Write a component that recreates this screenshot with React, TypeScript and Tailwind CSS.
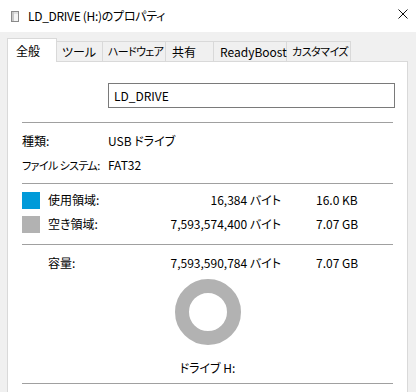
import React from "react";

const tabs = [
  { label: "全般", w: "w-[50px]", pl: "pl-[8px]", active: true, tx: "" },
  { label: "ツール", w: "w-[46px]", pl: "pl-[5px]", tx: "" },
  { label: "ハードウェア", w: "w-[63px]", pl: "pl-[5px]", tx: "text-[11px] tracking-[-0.7px]" },
  { label: "共有", w: "w-[48px]", pl: "pl-[6px]", tx: "" },
  { label: "ReadyBoost", w: "w-[73px]", pl: "pl-[6px]", tx: "" },
  { label: "カスタマイズ", w: "w-[64px]", pl: "pl-[5px]", tx: "text-[11px] tracking-[-0.5px]" },
];

function DriveIcon() {
  return (
    <svg width="8" height="11" viewBox="0 0 8 11" aria-hidden>
      <rect x="0.5" y="0.5" width="7" height="10" fill="#f4f4f4" stroke="#8a8a8a" />
      <rect x="1" y="1" width="2" height="9" fill="#c8c8c8" />
      <rect x="3" y="1" width="4" height="2" fill="#e0e0e0" />
    </svg>
  );
}

function Sep({ className = "" }: { className?: string }) {
  return <div className={`h-px bg-[#a0a0a0] ${className}`} />;
}

export default function App() {
  return (
    <div className="w-[416px] h-[392px] overflow-hidden whitespace-nowrap bg-[#f0f0f0] text-[12px] leading-none text-black font-['Noto_Sans_CJK_JP',sans-serif] [font-feature-settings:'palt']">
      {/* title bar */}
      <div className="relative flex h-[32px] items-center bg-white">
        <div className="ml-[11px] flex items-center">
          <DriveIcon />
        </div>
        <span className="ml-[9px] tracking-[-0.3px]">LD_DRIVE (H:)のプロパティ</span>
        <svg className="absolute right-[8px] top-[9px]" width="10" height="10" viewBox="0 0 10 10" aria-hidden>
          <path d="M0.5 0.5 L9.5 9.5 M9.5 0.5 L0.5 9.5" stroke="#111" strokeWidth="1" />
        </svg>
      </div>

      <div className="pl-[7px] pt-[6px]">
        {/* tabs */}
        <div className="flex h-[23px] items-end">
          {tabs.map((t) =>
            t.active ? (
              <div
                key={t.label}
                className={`relative z-10 mb-[-1px] flex h-[24px] items-center border-x border-t border-[#d9d9d9] bg-white ${t.w} ${t.pl}`}
              >
                {t.label}
              </div>
            ) : (
              <div
                key={t.label}
                className={`flex h-[20px] items-center border-r border-t border-[#d9d9d9] bg-[#f0f0f0] ${t.w} ${t.pl} ${t.tx}`}
              >
                {t.label}
              </div>
            )
          )}
        </div>

        {/* panel */}
        <div className="h-[340px] w-[401px] border border-[#d9d9d9] bg-white px-[14px] pt-[21px]">
          <div className="ml-[86px] flex h-[25px] w-[287px] items-center border border-[#7a7a7a] pl-[5px]">
            LD_DRIVE
          </div>

          <Sep className="mt-[14px]" />

          <div className="mt-[6px] flex h-[24px] items-center">
            <span className="w-[86px]">種類:</span>
            <span>USB ドライブ</span>
          </div>
          <div className="flex h-[24px] items-center">
            <span className="w-[86px] text-[11px] tracking-[-0.6px]">ファイル システム:</span>
            <span>FAT32</span>
          </div>

          <Sep className="mt-[6px]" />

          <div className="mt-[4px] flex h-[24px] items-center">
            <span className="h-[17px] w-[18px] bg-[#009ad9]" />
            <span className="ml-[8px] w-[100px]">使用領域:</span>
            <span className="w-[133px] text-right">16,384 バイト</span>
            <span className="ml-[35px]">16.0 KB</span>
          </div>
          <div className="flex h-[24px] items-center">
            <span className="h-[17px] w-[18px] bg-[#b2b2b2]" />
            <span className="ml-[8px] w-[100px]">空き領域:</span>
            <span className="w-[133px] text-right">7,593,574,400 バイト</span>
            <span className="ml-[35px]">7.07 GB</span>
          </div>

          <Sep className="mt-[8px]" />

          <div className="mt-[6px] flex h-[24px] items-center">
            <span className="ml-[26px] w-[100px]">容量:</span>
            <span className="w-[133px] text-right">7,593,590,784 バイト</span>
            <span className="ml-[35px]">7.07 GB</span>
          </div>

          <div className="mt-[4px] flex justify-center">
            <svg width="66" height="66" viewBox="0 0 66 66" aria-hidden>
              <circle cx="33" cy="33" r="26" fill="none" stroke="#b2b2b2" strokeWidth="14" />
            </svg>
          </div>

          <div className="mt-[13px] flex h-[20px] items-center justify-center">ドライブ H:</div>

          <Sep className="mt-[5px]" />
        </div>
      </div>
    </div>
  );
}
